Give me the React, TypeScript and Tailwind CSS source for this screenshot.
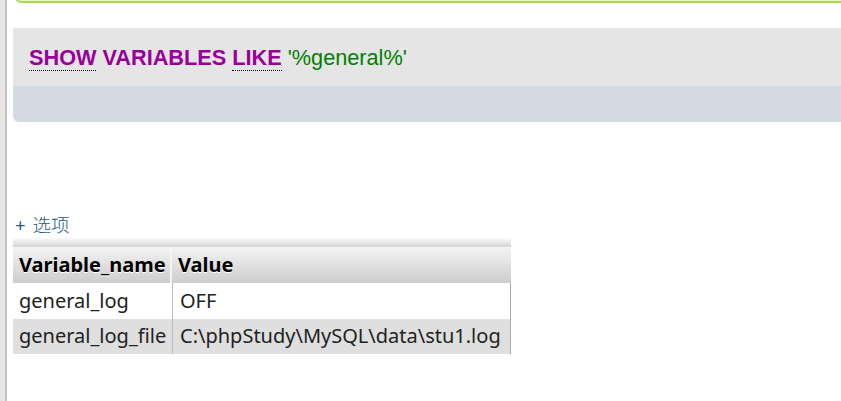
const rows = [
  { name: "general_log", value: "OFF" },
  { name: "general_log_file", value: "C:\\phpStudy\\MySQL\\data\\stu1.log" },
];

export default function App() {
  return (
    <div className="flex h-[401px] w-[841px] overflow-hidden bg-white">
      <div className="w-[7px] shrink-0 border-r-2 border-[#c4c4c4] bg-[#e6e6e6]" />

      <div className="flex min-w-0 flex-1 flex-col pl-[6px]">
        <div className="ml-[2px] -mt-[6px] h-[9px] shrink-0 rounded-bl-[6px] border-b-2 border-l-2 border-[#a9dc4a] bg-white shadow-[inset_0_-1px_0_#e2f7b8]" />

        <div className="mt-[25px] mr-[-12px] shrink-0 overflow-hidden rounded-bl-[6px]">
          <div className="flex h-[58px] items-center bg-[#e5e5e5] pl-[16px] pt-[2px] font-['Liberation_Sans',Arial,sans-serif] text-[21.7px]">
            <span className="border-b border-dotted border-black font-bold leading-[24px] text-[#990099]">SHOW</span>
            <span className="whitespace-pre font-bold leading-[24px] text-[#990099]"> VARIABLES </span>
            <span className="border-b border-dotted border-black font-bold leading-[24px] text-[#990099]">LIKE</span>
            <span className="whitespace-pre leading-[24px] text-[#008000]"> '%general%'</span>
          </div>
          <div className="h-[36px] bg-[#d3dae1]" />
        </div>

        <div className="mt-[90px] flex h-[25px] shrink-0 items-center pl-[2px] font-['Noto_Sans','Noto_Sans_CJK_SC',sans-serif] text-[18.5px] text-[#235a81]">
          <span className="mr-[7px]">+</span>
          <span className="font-light">选项</span>
        </div>

        <div className="w-[498px] shrink-0 font-['Noto_Sans','Noto_Sans_CJK_SC',sans-serif] text-[20px] text-[#222]">
          <div className="h-[10px] bg-gradient-to-b from-white to-[#d4d4d4]" />
          <div className="flex h-[36px] bg-gradient-to-b from-[#f4f4f4] to-[#cdcdcd] font-bold text-black [text-shadow:0_1px_0_#fff]">
            <div className="flex w-[159px] items-center border-r-2 border-[#f4f4f4] pl-[6px]">Variable_name</div>
            <div className="flex flex-1 items-center pl-[6px]">Value</div>
          </div>
          {rows.map((r, i) => (
            <div
              key={r.name}
              className={`flex h-[35.5px] border-r border-[#aaa] ${i % 2 ? "bg-[#dfdfdf]" : "bg-white"}`}
            >
              <div className="flex w-[160px] items-center border-r border-[#bbb] pl-[6px]">{r.name}</div>
              <div className="flex flex-1 items-center pl-[7px]">{r.value}</div>
            </div>
          ))}
        </div>
      </div>
    </div>
  );
}
